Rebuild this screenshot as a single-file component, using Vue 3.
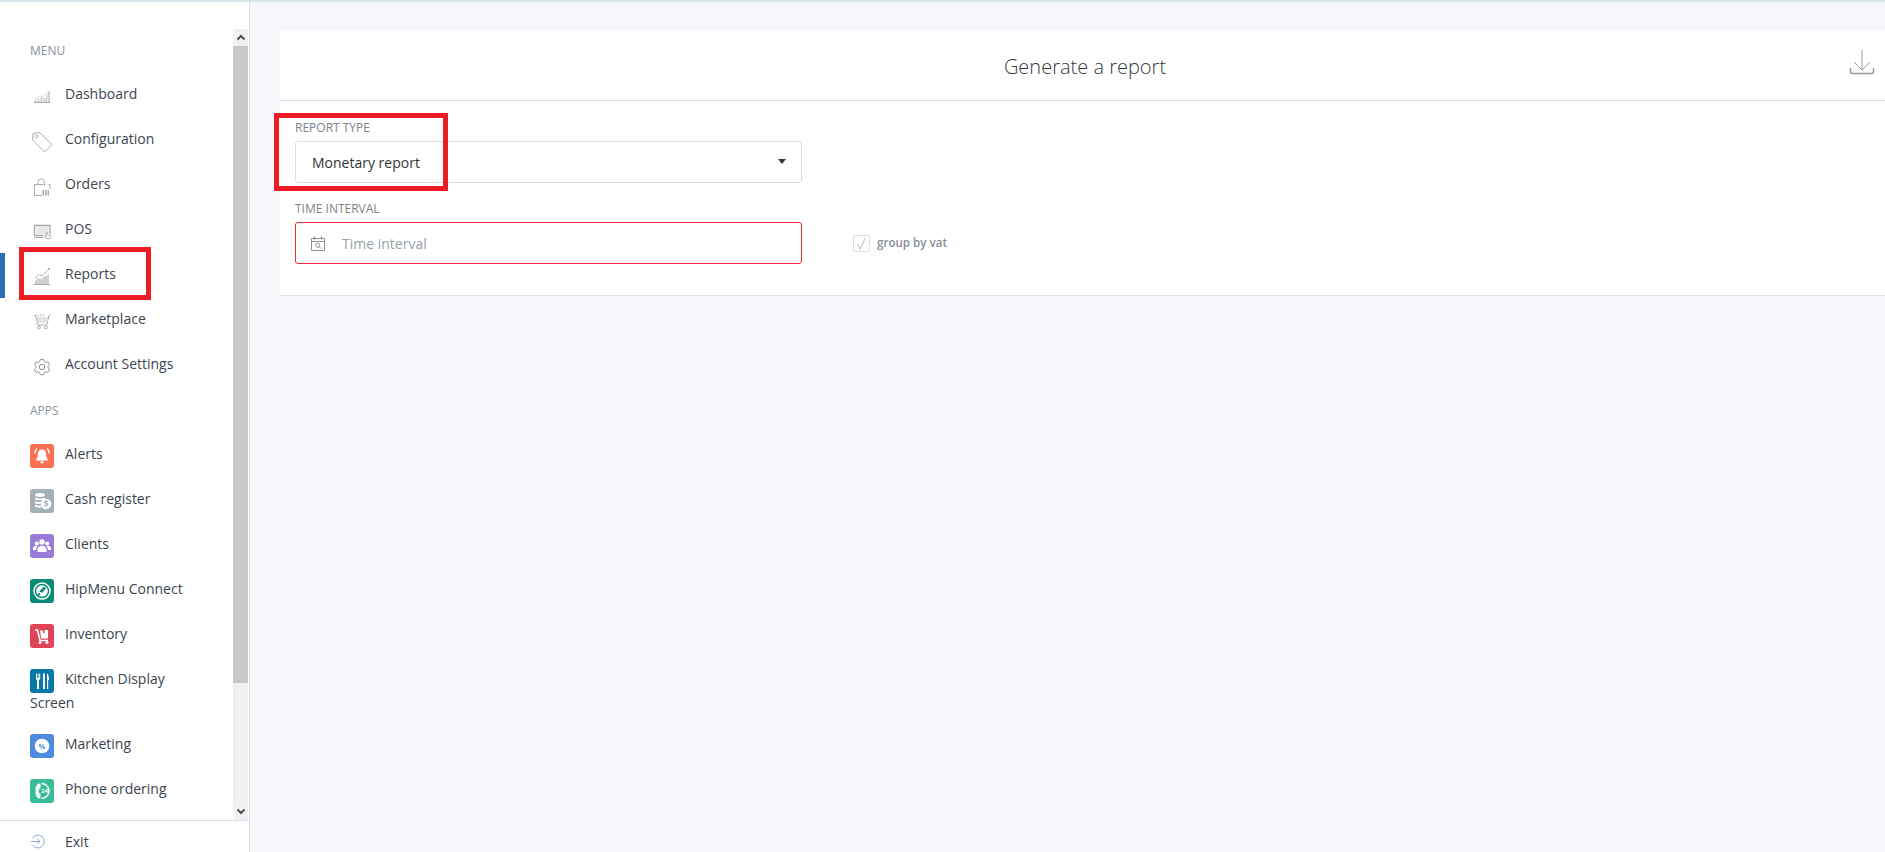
<script setup>
const L = 'fill="none" stroke="#a9adb1" stroke-width="1"'
const B = 'fill="#cfd2d5"'
const W = 'fill="#fff"'
const menu = [
  { name: 'Dashboard', svg: `<path d="M4 18.500h16" ${L}/><path ${B} d="M4.500 16h2v2h-2zM7.500 15h2v3h-2zM10.500 13h2v5h-2zM13.500 14h2v4h-2zM16 11h1.500v7H16zM18 7.500h2V18h-2z"/><path d="M4.500 15 8 14 10.500 12 13.500 13 16 10 19 7" fill="none" stroke="#cfd2d5" stroke-width=".7"/>` },
  { name: 'Configuration', svg: `<path d="M3 4.500 9.500 3.500 22 15.500 14.500 23 2.500 10.500Z" ${L} stroke-linejoin="round"/><circle cx="6.500" cy="7.500" r="1.400" ${L}/>` },
  { name: 'Orders', svg: `<path d="M4.500 21.500V10.500h11M20 15v-4.500h-1.500" ${L}/><path d="M8 10.500V8a3.200 3.200 0 0 1 6.400 0v2.500" ${L}/><path d="M4.500 21.500h7.500" ${L}/><path fill="#a9adb1" d="M12.500 16h1.500v5.500h-1.500zM15 16h1.500v5.500H15zM17.500 16H19v5.500h-1.500z"/>` },
  { name: 'POS', svg: `<path d="M20 15V6.500H4.500v10h9" fill="none" stroke="#a3a7ab" stroke-width="1.300"/><path fill="#e6e8ea" d="M6.500 8h12v7h-12z"/><path d="M4 18.500h9" ${L}/><path d="M16 13.500v4l-1.500-.5 2 2.700h3.500l.7-3-3.300-1v-2.200z" fill="#fff" stroke="#a3a7ab" stroke-width=".9"/>` },
  { name: 'Reports', svg: `<path d="M4 20.500h16" ${L}/><path ${B} d="M5 20v-3l3-3 3 1.500 4-4 1 1 3-3V20Z"/><path d="M5 14 9 10.500 12 12 19 5" fill="none" stroke="#a4a8ac" stroke-width="1" stroke-dasharray="2.500 .7"/><circle cx="19" cy="5" r="1" fill="#a4a8ac"/>` },
  { name: 'Marketplace', svg: `<path d="M4 6.500h1.800l2 9.500h9l2-9 1.500-2" ${L}/><path fill="#e0e2e4" d="M7 8h11l-1 6H8z"/><path d="M8 7V5.500M11 7V5M14 7V5.500" ${L}/><circle cx="9" cy="18.500" r="1.400" ${L}/><circle cx="16" cy="18.500" r="1.400" ${L}/>` },
  { name: 'Account Settings', svg: `<path d="M10.300 5.400h3.400l.5 2 1.700 1 2-.6 1.700 3-1.500 1.400v1.800l1.500 1.400-1.700 3-2-.6-1.700 1-.5 2h-3.400l-.5-2-1.700-1-2 .6-1.700-3 1.500-1.400v-1.800L4.400 10.800l1.700-3 2 .6 1.700-1z" fill="none" stroke="#8f9499" stroke-width="1" stroke-linejoin="round"/><circle cx="12" cy="13" r="2.700" fill="none" stroke="#8f9499" stroke-width="1"/>` }
]
const apps = [
  { name: 'Alerts', color: '#ff7052', svg: `<path ${W} d="M12 5.500c-3 0-4.200 2.400-4.200 5 0 3-1 4.500-2.300 6h13c-1.300-1.500-2.300-3-2.300-6 0-2.600-1.200-5-4.200-5z"/><path ${W} d="M10 17.500h4a2 2 0 0 1-4 0z"/><path d="M4.800 9.500C4.800 7.500 5.500 6 6.800 4.500M19.200 9.500c0-2-.7-3.500-2-5" fill="none" stroke="#fff" stroke-width="1.300"/>` },
  { name: 'Cash register', color: '#a4b0b7', svg: `<ellipse cx="10" cy="6" rx="5" ry="1.900" ${W}/><path ${W} d="M5 8.500c2 1.300 8 1.300 10 0v1.800c-2 1.300-8 1.300-10 0zM5 12c2 1.300 5 1.300 6 1l-.6 2c-2 0-4-.2-5.400-1.100zM5 15.800c1.500.8 3.500 1 5.500 1l.7 1.800C9 18.800 6.500 18.500 5 17.600z"/><circle cx="16" cy="15" r="5.300" ${W}/><text x="16" y="18" text-anchor="middle" font-family="Open Sans, sans-serif" font-size="8" font-weight="700" fill="#a4b0b7">$</text>` },
  { name: 'Clients', color: '#9b7bd8', svg: `<circle cx="12" cy="8" r="2.700" ${W}/><circle cx="6.800" cy="9.500" r="2.100" ${W}/><circle cx="17.200" cy="9.500" r="2.100" ${W}/><path ${W} d="M7.500 18v-2.500c0-2.300 2-3.800 4.500-3.800s4.500 1.500 4.500 3.800V18zM3 16v-1.500c0-1.600 1.500-2.700 3.300-2.700.6 0 .9.100 1.300.3C6.700 13 6.200 14 6.200 16zM21 16v-1.500c0-1.600-1.500-2.700-3.300-2.700-.6 0-.9.100-1.300.3.900.900 1.400 1.900 1.400 3.900z"/>` },
  { name: 'HipMenu Connect', color: '#0b8a78', svg: `<circle cx="12" cy="12" r="8" fill="none" stroke="#fff" stroke-width="1.500"/><circle cx="12" cy="12" r="5.800" ${W}/><path fill="#0b8a78" d="M9.200 12.500 13 8.500c1-.8 2.600-.3 3 .7l-3.800 4.500zM8.800 13.500l2 1.600-2.800 2.400-.9-1z"/>` },
  { name: 'Inventory', color: '#e04457', svg: `<path d="M5 6h2.500l2.500 10.500h8" fill="none" stroke="#fff" stroke-width="1.600"/><path ${W} d="M10 6.500h3v2.500h1.500V6h3.500v8.500h-6.800z"/><circle cx="10" cy="18.500" r="1.500" ${W}/><circle cx="17" cy="18.500" r="1.500" ${W}/>` },
  { name: 'Kitchen Display Screen', color: '#0578a8', svg: `<path ${W} d="M6 4.500h1v4.500h.7V4.500h.8V9h.7V4.500h1v5.700L9 11v9H7v-9l-1-.8zM13 4.500h2V20h-2zM17 4.500c1.300.5 2 2.500 2 6.500h-.8v9H17z"/>` },
  { name: 'Marketing', color: '#4e8ae0', svg: `<circle cx="12" cy="12" r="7.300" ${W}/><text x="12" y="14.600" text-anchor="middle" font-family="Open Sans, sans-serif" font-size="7.500" font-weight="700" fill="#4e8ae0">%</text>` },
  { name: 'Phone ordering', color: '#38bd98', svg: `<path d="M11.500 4.500a7.500 7.500 0 1 1 0 15" fill="none" stroke="#fff" stroke-width="1.500"/><path ${W} d="M8.500 4.500 10.500 5v4L9 10c-.3 1.500-.3 2.500 0 4l1.500 1v4l-2 .5C5.800 18 5.500 15 5.500 12s.3-6 3-7.500z"/><text x="14.500" y="14.300" text-anchor="middle" font-family="Open Sans, sans-serif" font-size="6" font-weight="700" fill="#fff">24</text>` }
]
</script>

<template>
  <div class="page">
    <aside class="sidebar">
      <div class="upper">
        <nav class="nav">
          <div class="heading">Menu</div>
          <a v-for="(item, i) in menu" :key="item.name" class="item" :class="{ active: i === 4 }">
            <svg class="ico" viewBox="0 0 24 24" v-html="item.svg"></svg>{{ item.name }}
          </a>
          <div class="heading">Apps</div>
          <a v-for="item in apps" :key="item.name" class="item">
            <svg class="ico tile" :style="{ background: item.color }" viewBox="0 0 24 24" v-html="item.svg"></svg>{{ item.name }}
          </a>
        </nav>
        <div class="scrollbar">
          <div class="arrow">
            <svg width="10" height="7" viewBox="0 0 10 7"><path d="M1.500 5.500 5 2l3.500 3.500" fill="none" stroke="#505050" stroke-width="2"/></svg>
          </div>
          <div class="thumb"></div>
          <div class="track"></div>
          <div class="arrow">
            <svg width="10" height="7" viewBox="0 0 10 7"><path d="M1.500 1.500 5 5l3.500-3.500" fill="none" stroke="#505050" stroke-width="2"/></svg>
          </div>
        </div>
      </div>
      <a class="exit">
        <svg class="exit-ico" viewBox="0 0 16 16"><path d="M2.600 4.500A6.800 6.800 0 1 1 2.600 11.500" fill="none" stroke="#7f9fd8" stroke-width="1"/><path d="M1 8h9.500M7.800 5.200 10.700 8l-2.900 2.800" fill="none" stroke="#7f9fd8" stroke-width="1"/></svg>Exit
      </a>
    </aside>

    <main class="main">
      <section class="card">
        <header class="card-head">
          <h1>Generate a report</h1>
          <svg class="download" viewBox="0 0 26 26"><path d="M13 1v19M5 13l8 8 8-8" fill="none" stroke="#98999b" stroke-width="1"/><path d="M1.500 19v3.500a2 2 0 0 0 2 2h19a2 2 0 0 0 2-2V19" fill="none" stroke="#98999b" stroke-width="1.500"/></svg>
        </header>
        <div class="form">
          <label class="label">Report type</label>
          <div class="field select">
            <span>Monetary report</span>
            <i class="caret"></i>
          </div>
          <label class="label second">Time interval</label>
          <div class="row">
            <div class="field invalid">
              <svg class="cal" viewBox="0 0 14 15"><path d="M.5 2.500h13v12H.5zM.5 5.500h13" fill="none" stroke="#8f9499" stroke-width="1"/><path d="M3.500.5v3M10.500.5v3" fill="none" stroke="#8f9499" stroke-width="1.500"/><circle cx="6.800" cy="9.300" r="2" fill="none" stroke="#8f9499" stroke-width="1"/><path d="m8.300 10.800 1.800 1.800" stroke="#8f9499" stroke-width="1"/></svg>
              <span class="placeholder">Time interval</span>
            </div>
            <div class="check">
              <span class="box">
                <svg width="13" height="15" viewBox="0 0 13 15"><path d="M2.500 8.500 5 13 10.500 2" fill="none" stroke="#b4b8bc" stroke-width="1"/></svg>
              </span>
              <span class="check-label">group by vat</span>
            </div>
          </div>
        </div>
      </section>
    </main>

    <div class="mark mark-nav"></div>
    <div class="mark mark-type"></div>
  </div>
</template>

<style>
html, body { margin: 0; overflow: hidden; background: #f5f7fb; }
</style>

<style scoped>
.page {
  position: relative;
  display: flex;
  height: 852px;
  box-sizing: border-box;
  border-top: 2px solid #d7e1e8;
  overflow: hidden;
  font-family: "Open Sans", sans-serif;
  font-size: 14px;
  line-height: 20px;
  color: #3c4450;
  background: #f5f7fb;
}
.sidebar {
  flex: 0 0 250px;
  box-sizing: border-box;
  display: flex;
  flex-direction: column;
  background: #fff;
  border-right: 1px solid #d7e1e8;
}
.upper {
  flex: 1;
  min-height: 0;
  display: flex;
  padding-right: 1px;
}
.nav {
  flex: 1;
  min-width: 0;
  padding-top: 26px;
}
.heading {
  height: 45px;
  padding-left: 30px;
  line-height: 45px;
  font-size: 12px;
  text-transform: uppercase;
  color: #8b939f;
}
.item {
  display: block;
  position: relative;
  padding: 10px 30px;
  cursor: pointer;
}
.item.active::before {
  content: "";
  position: absolute;
  left: 0;
  top: 0;
  bottom: 0;
  width: 5px;
  background: #2a6fb5;
}
.ico {
  width: 24px;
  height: 24px;
  margin: 0.5px 11px 0.5px 0;
  vertical-align: middle;
}
.tile { border-radius: 3px; }
.scrollbar {
  flex: 0 0 15px;
  margin-top: 27px;
  display: flex;
  flex-direction: column;
  background: #f0f0f0;
}
.arrow {
  height: 17px;
  display: flex;
  align-items: center;
  justify-content: center;
  background: #f1f1f1;
}
.thumb { height: 637px; background: #c8c8c8; }
.track { flex: 1; }
.exit {
  flex: 0 0 32px;
  box-sizing: border-box;
  display: flex;
  align-items: center;
  padding: 10px 0 0 30px;
  border-top: 1px solid #d7e1e8;
}
.exit-ico {
  width: 15px;
  height: 15px;
  margin-right: 20px;
}
.main {
  flex: 1;
  min-width: 0;
  padding: 28px 0 0 30px;
}
.card {
  margin-right: -5px;
  background: #fff;
  border-bottom: 1px solid #d8dfe5;
}
.card-head {
  position: relative;
  height: 70px;
  display: flex;
  align-items: center;
  justify-content: center;
  border-bottom: 1px solid #d7e1e8;
}
.card-head h1 {
  margin: 4px 0 0;
  font-size: 20px;
  font-weight: 300;
  color: #343a44;
}
.download {
  position: absolute;
  right: 15px;
  top: 19px;
  width: 26px;
  height: 26px;
}
.form { padding: 18px 15px 31px; }
.label {
  display: block;
  height: 17px;
  line-height: 17px;
  margin-bottom: 5px;
  font-size: 12px;
  text-transform: uppercase;
  color: #7d828a;
}
.label.second { margin-top: 17px; }
.field {
  width: 507px;
  height: 42px;
  box-sizing: border-box;
  display: flex;
  align-items: center;
  padding: 1px 14px 0 16px;
  border: 1px solid #d5dfe5;
  border-radius: 3px;
  color: #333;
}
.select { justify-content: space-between; }
.caret {
  border: 4.500px solid transparent;
  border-top: 5px solid #333;
  border-bottom: 0;
  margin: -3px 1px 0 0;
}
.row {
  display: flex;
  align-items: center;
}
.invalid {
  padding-left: 15px;
  border-color: #ed2a3c;
}
.cal {
  width: 14px;
  height: 15px;
  margin-right: 17px;
}
.placeholder { color: #999fa7; }
.check {
  display: flex;
  align-items: center;
  margin-left: 51px;
}
.box {
  width: 17px;
  height: 17px;
  box-sizing: border-box;
  display: flex;
  align-items: center;
  justify-content: center;
  border: 1px solid #d5dfe5;
  border-radius: 2px;
}
.check-label {
  margin-left: 7px;
  font-size: 11.600px;
  font-weight: 600;
  color: #8a8f96;
}
.mark {
  position: absolute;
  box-sizing: border-box;
  border: 5px solid #ed1c24;
  pointer-events: none;
}
.mark-nav {
  left: 19px;
  top: 245px;
  width: 132px;
  height: 53px;
}
.mark-type {
  left: 274px;
  top: 111px;
  width: 174px;
  height: 78px;
}
</style>
